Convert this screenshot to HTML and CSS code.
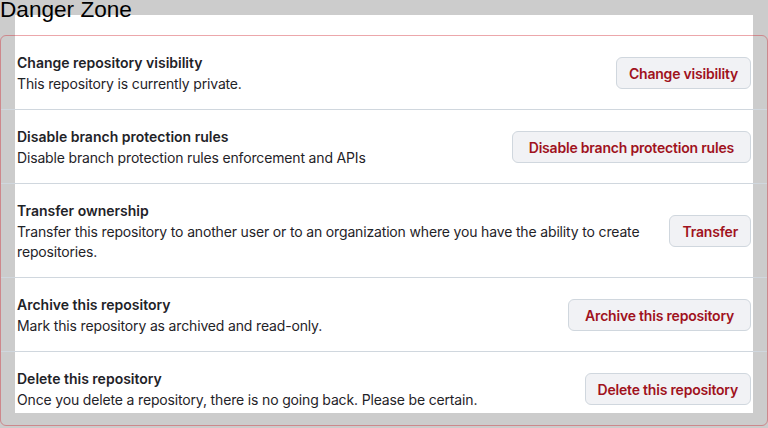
FILE: index.html
```html
<!DOCTYPE html>
<html lang="en">
<head>
    <meta charset="UTF-8">
    <title>Danger Zone</title>
    <link rel="stylesheet" href="styles.css">
</head>
<body>
<div class="page">
    <h2 class="danger__title">Danger Zone</h2>
    <div class="danger">
        <div class="danger__row">
            <div class="danger__text">
                <strong class="danger__heading">Change repository visibility</strong>
                <p class="danger__desc">This repository is currently private.</p>
            </div>
            <button class="danger__btn">Change visibility</button>
        </div>
        <div class="danger__row">
            <div class="danger__text">
                <strong class="danger__heading">Disable branch protection rules</strong>
                <p class="danger__desc">Disable branch protection rules enforcement and APIs</p>
            </div>
            <button class="danger__btn danger__btn--wide">Disable branch protection rules</button>
        </div>
        <div class="danger__row">
            <div class="danger__text">
                <strong class="danger__heading">Transfer ownership</strong>
                <p class="danger__desc">Transfer this repository to another user or to an organization where you have the ability to create repositories.</p>
            </div>
            <button class="danger__btn">Transfer</button>
        </div>
        <div class="danger__row">
            <div class="danger__text">
                <strong class="danger__heading">Archive this repository</strong>
                <p class="danger__desc">Mark this repository as archived and read-only.</p>
            </div>
            <button class="danger__btn danger__btn--wide">Archive this repository</button>
        </div>
        <div class="danger__row">
            <div class="danger__text">
                <strong class="danger__heading">Delete this repository</strong>
                <p class="danger__desc">Once you delete a repository, there is no going back. Please be certain.</p>
            </div>
            <button class="danger__btn">Delete this repository</button>
        </div>
    </div>
</div>
</body>
</html>
```

FILE: styles.css
```css
html,
body {
    margin: 0;
    padding: 0;
    background: #cccccc;
}

.page {
    min-height: 428px;
    background: #cccccc linear-gradient(#fff, #fff) 15px 15px / 738px 398px no-repeat;
    font-family: Inter, "Liberation Sans", sans-serif;
    color: #1f2328;
    overflow: hidden;
}

.danger__title {
    margin: -1px 0 14px;
    font-family: "Liberation Sans", Arial, sans-serif;
    font-size: 22.6px;
    font-weight: 400;
    line-height: 22px;
    color: #000;
}

.danger {
    border: 1px solid rgba(207, 34, 46, .4);
    border-radius: 6px;
}

.danger__row {
    display: flex;
    align-items: center;
    padding: 16px 16px 15px;
}

.danger__row + .danger__row {
    border-top: 1px solid #d0d7de;
}

.danger__text {
    flex: 1;
}

.danger__heading {
    display: block;
    font-size: 14px;
    font-weight: 600;
    line-height: 22px;
}

.danger__desc {
    margin: 0;
    font-size: 14px;
    line-height: 20px;
    letter-spacing: -.16px;
}

.danger__btn {
    flex-shrink: 0;
    height: 32px;
    margin-left: 16px;
    padding: 0 12px;
    border: 1px solid #d0d7de;
    border-radius: 6px;
    background: #f1f2f5;
    color: #a0121d;
    font-family: Inter, "Liberation Sans", sans-serif;
    font-size: 14px;
    font-weight: 600;
    letter-spacing: -.2px;
    white-space: nowrap;
}

.danger__btn--wide {
    padding: 0 16px;
}
```
